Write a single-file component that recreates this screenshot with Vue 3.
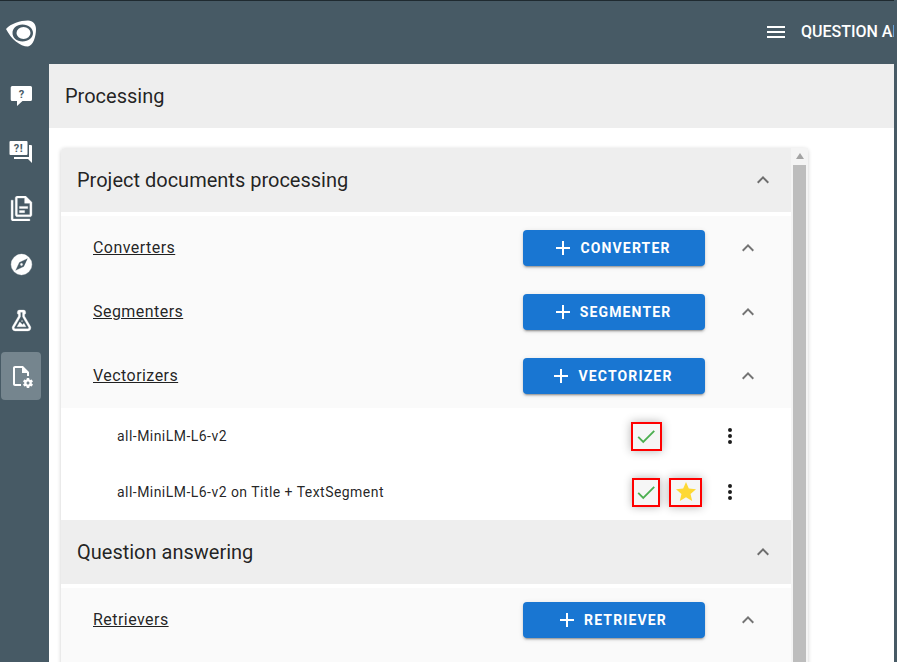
<script setup>
const sideIcons = [
  { id: 'doc', size: 25, d: 'M16 0H8C6.9 0 6 .9 6 2V18C6 19.1 6.9 20 8 20H20C21.1 20 22 19.1 22 18V6L16 0M20 18H8V2H15V7H20V18M4 4V22H20V24H4C2.9 24 2 23.1 2 22V4H4M10 10V12H18V10H10M10 14V16H15V14H10Z' },
  { id: 'compass', size: 25, d: 'M14.19,14.19L6,18L9.81,9.81L18,6M12,2A10,10 0 0,0 2,12A10,10 0 0,0 12,22A10,10 0 0,0 22,12A10,10 0 0,0 12,2M12,10.9A1.1,1.1 0 0,0 10.9,12A1.1,1.1 0 0,0 12,13.1A1.1,1.1 0 0,0 13.1,12A1.1,1.1 0 0,0 12,10.9Z' },
  { id: 'flask', size: 25, d: 'M5,19A1,1 0 0,0 6,20H18A1,1 0 0,0 19,19C19,18.79 18.93,18.59 18.82,18.43L13,8.35V4H11V8.35L5.18,18.43C5.07,18.59 5,18.79 5,19M6,22A3,3 0 0,1 3,19C3,18.4 3.18,17.84 3.5,17.37L9,7.81V6A1,1 0 0,1 8,5V4A2,2 0 0,1 10,2H14A2,2 0 0,1 16,4V5A1,1 0 0,1 15,6V7.81L20.5,17.37C20.82,17.84 21,18.4 21,19A3,3 0 0,1 18,22H6M13,16L14.34,14.66L16.27,18H7.73L10.39,13.39L13,16M12.5,12A0.5,0.5 0 0,1 13,12.5A0.5,0.5 0 0,1 12.5,13A0.5,0.5 0 0,1 12,12.5A0.5,0.5 0 0,1 12.5,12Z' }
]
const fileCog = 'M6 2C4.89 2 4 2.89 4 4V20C4 21.11 4.89 22 6 22H12V20H6V4H13V9H18V12H20V8L14 2M18 14C17.87 14 17.76 14.09 17.74 14.21L17.55 15.53C17.25 15.66 16.96 15.82 16.7 16L15.46 15.5C15.35 15.5 15.22 15.5 15.15 15.63L14.15 17.36C14.09 17.47 14.11 17.6 14.21 17.68L15.27 18.5C15.25 18.67 15.24 18.83 15.24 19C15.24 19.17 15.25 19.33 15.27 19.5L14.21 20.32C14.12 20.4 14.09 20.53 14.15 20.64L15.15 22.37C15.21 22.5 15.34 22.5 15.46 22.5L16.7 22C16.96 22.18 17.24 22.35 17.55 22.47L17.74 23.79C17.76 23.91 17.86 24 18 24H20C20.11 24 20.22 23.91 20.24 23.79L20.43 22.47C20.73 22.34 21 22.18 21.27 22L22.5 22.5C22.63 22.5 22.76 22.5 22.83 22.37L23.83 20.64C23.89 20.53 23.86 20.4 23.77 20.32L22.7 19.5C22.72 19.33 22.74 19.17 22.74 19C22.74 18.83 22.73 18.67 22.7 18.5L23.76 17.68C23.85 17.6 23.88 17.47 23.82 17.36L22.82 15.63C22.76 15.5 22.63 15.5 22.5 15.5L21.27 16C21 15.82 20.73 15.65 20.42 15.53L20.23 14.21C20.22 14.09 20.11 14 20 14M19 17.5C19.83 17.5 20.5 18.17 20.5 19C20.5 19.83 19.83 20.5 19 20.5C18.16 20.5 17.5 19.83 17.5 19C17.5 18.17 18.17 17.5 19 17.5Z'
const chevron = 'M7.41,15.41L12,10.83L16.59,15.41L18,14L12,8L6,14L7.41,15.41Z'
const plus = 'M19,13H13V19H11V13H5V11H11V5H13V11H19V13Z'
const dots = 'M12,16A2,2 0 0,1 14,18A2,2 0 0,1 12,20A2,2 0 0,1 10,18A2,2 0 0,1 12,16M12,10A2,2 0 0,1 14,12A2,2 0 0,1 12,14A2,2 0 0,1 10,12A2,2 0 0,1 12,10M12,4A2,2 0 0,1 14,6A2,2 0 0,1 12,8A2,2 0 0,1 10,6A2,2 0 0,1 12,4Z'
const star = 'M12,17.27L18.18,21L16.54,13.97L22,9.24L14.81,8.62L12,2L9.19,8.62L2,9.24L7.45,13.97L5.82,21L12,17.27Z'

const sections = [
  {
    title: 'Project documents processing',
    rows: [
      { name: 'Converters', action: 'CONVERTER' },
      { name: 'Segmenters', action: 'SEGMENTER' },
      { name: 'Vectorizers', action: 'VECTORIZER' }
    ],
    items: [
      { name: 'all-MiniLM-L6-v2', wide: true, starred: false },
      { name: 'all-MiniLM-L6-v2 on Title + TextSegment', wide: false, starred: true }
    ]
  },
  {
    title: 'Question answering',
    rows: [{ name: 'Retrievers', action: 'RETRIEVER' }],
    items: []
  }
]
</script>

<template>
  <div class="shell">
    <header class="topbar">
      <div class="logo">
        <svg width="32" height="30" viewBox="0 0 32 30">
          <path class="logo-outer" fill-rule="evenodd" d="M1 11C6 5.500 15 2.500 23 2.500C28 3 31 6 31 11C31 19 28 27.500 23 28.500C15 28.500 6 21 1 11ZM17.500 6.500C11.500 6.500 7.500 10.500 7.500 15C7.500 19.500 11.500 23.500 17.500 23.500C23.500 23.500 28 19.500 28 15C28 10.500 23.500 6.500 17.500 6.500Z"/>
          <ellipse class="logo-outer" cx="18.500" cy="15" rx="7" ry="6"/>
        </svg>
      </div>
      <div class="menu">
        <svg width="24" height="24" viewBox="0 0 24 24"><path fill="#fff" d="M3,6H21V8H3V6M3,11H21V13H3V11M3,16H21V18H3V16Z"/></svg>
      </div>
      <div class="app-title">QUESTION ANSWERING</div>
    </header>

    <div class="body">
      <nav class="sidebar">
        <div class="nav-item">
          <svg width="24" height="24" viewBox="0 0 24 24">
            <path fill="#fff" d="M3.200 2H21.500A1.500 1.500 0 0 1 23 3.500V15.500A1.500 1.500 0 0 1 21.500 17H13.500L8 22V17H3.200A1.500 1.500 0 0 1 1.700 15.500V3.500A1.500 1.500 0 0 1 3.200 2Z"/>
            <text x="12.400" y="13.500" class="glyph" text-anchor="middle">?</text>
          </svg>
        </div>
        <div class="nav-item">
          <svg width="24" height="24" viewBox="0 0 24 24">
            <path fill="#fff" d="M1.500 1H17.500A1 1 0 0 1 18.500 2V14A1 1 0 0 1 17.500 15H1.500A1 1 0 0 1 .5 14V2A1 1 0 0 1 1.500 1Z"/>
            <path fill="#fff" d="M20 5H22A1 1 0 0 1 23 6V23L19 19H5V17H20Z"/>
            <text x="9.500" y="12" class="glyph glyph-wide" text-anchor="middle">?!</text>
          </svg>
        </div>
        <div v-for="icon in sideIcons" :key="icon.id" class="nav-item">
          <svg :width="icon.size" :height="icon.size" viewBox="0 0 24 24"><path fill="#fff" stroke="#fff" stroke-width="0.300" :d="icon.d"/></svg>
        </div>
        <div class="nav-item active">
          <svg width="24" height="24" viewBox="0 0 24 24"><path fill="#fff" :d="fileCog"/></svg>
        </div>
      </nav>

      <main class="main">
        <div class="page-head">Processing</div>
        <div class="page-content">
          <div class="card">
            <div class="list">
              <section v-for="section in sections" :key="section.title">
                <div class="section-head">
                  <span class="section-title">{{ section.title }}</span>
                  <svg class="chev" width="24" height="24" viewBox="0 0 24 24"><path :d="chevron"/></svg>
                </div>
                <div class="rows">
                  <div v-for="row in section.rows" :key="row.name" class="row">
                    <span class="row-name">{{ row.name }}</span>
                    <button class="add-btn" type="button">
                      <svg width="24" height="24" viewBox="0 0 24 24"><path fill="#fff" :d="plus"/></svg>
                      <span>{{ row.action }}</span>
                    </button>
                    <svg class="chev" width="24" height="24" viewBox="0 0 24 24"><path :d="chevron"/></svg>
                  </div>
                </div>
                <div v-if="section.items.length" class="items">
                  <div v-for="item in section.items" :key="item.name" class="item">
                    <span class="item-name">{{ item.name }}</span>
                    <div class="marks">
                      <div class="mark-cell">
                        <div class="mark" :class="item.wide ? 'mark-wide' : 'mark-narrow'">
                          <svg width="22" height="22" viewBox="0 0 24 24"><path class="check" d="M3.500 13L9 18.500L21 6.500"/></svg>
                        </div>
                      </div>
                      <div v-if="item.starred" class="mark mark-star">
                        <svg width="24" height="24" viewBox="0 0 24 24"><path fill="#fdd835" :d="star"/></svg>
                      </div>
                    </div>
                    <svg width="24" height="24" viewBox="0 0 24 24"><path fill="#1c1c1c" :d="dots"/></svg>
                  </div>
                </div>
              </section>
            </div>
            <div class="scrollbar">
              <div class="scroll-arrow"></div>
              <div class="scroll-thumb"></div>
            </div>
          </div>
        </div>
      </main>
    </div>
  </div>
</template>

<style>
html, body { margin: 0; overflow: hidden; }
</style>

<style scoped>
.shell {
  width: 897px;
  height: 662px;
  overflow: hidden;
  display: flex;
  flex-direction: column;
  background: #475a65;
  font-family: Roboto, "Liberation Sans", sans-serif;
  color: rgba(0, 0, 0, 0.87);
}
.topbar {
  height: 63px;
  flex: none;
  display: flex;
  align-items: center;
  border-top: 1px solid #1f2a30;
  margin-right: 3px;
  overflow: hidden;
  color: #fff;
}
.logo {
  width: 42px;
  flex: none;
  display: flex;
  justify-content: center;
}
.logo-outer { fill: #fff; }
.menu {
  flex: none;
  margin-left: 722px;
  margin-top: -2px;
  height: 24px;
}
.app-title {
  flex: none;
  margin-left: 13px;
  margin-top: -2px;
  font-size: 16px;
  font-weight: 500;
  white-space: nowrap;
}
.body {
  flex: 1;
  min-height: 0;
  display: flex;
}
.sidebar {
  width: 48px;
  flex: none;
  padding: 8px 0 0 1px;
  display: flex;
  flex-direction: column;
  gap: 8px;
}
.nav-item {
  width: 40px;
  height: 48px;
  border-radius: 4px;
  display: flex;
  align-items: center;
  justify-content: center;
}
.nav-item.active { background: #75858e; }
.glyph {
  font-family: Roboto, sans-serif;
  font-size: 11px;
  font-weight: 700;
  fill: #475a65;
}
.glyph-wide { letter-spacing: 0.5px; }
.main {
  flex: 1;
  min-width: 0;
  margin-right: 3px;
  background: #fff;
  display: flex;
  flex-direction: column;
}
.page-head {
  height: 64px;
  flex: none;
  display: flex;
  align-items: center;
  padding-left: 16px;
  background: #eeeeee;
  font-size: 20px;
}
.page-content {
  flex: 1;
  min-height: 0;
  padding: 20px 0 0 12px;
}
.card {
  width: 747px;
  height: 600px;
  display: flex;
  border-radius: 4px;
  background: #fff;
  box-shadow: 0 1px 4px rgba(0, 0, 0, 0.2);
}
.list {
  width: 730px;
  flex: none;
}
.section-head {
  height: 64px;
  display: flex;
  align-items: center;
  justify-content: space-between;
  padding: 0 16px;
  background: #eeeeee;
}
section:first-child .section-head { border-top-left-radius: 4px; }
.section-title {
  font-size: 20px;
}
.chev { flex: none; fill: rgba(0, 0, 0, 0.54); }
.rows {
  margin-top: 4px;
  background: #fafafa;
}
section:last-child .rows { padding-bottom: 40px; }
.row {
  height: 64px;
  display: flex;
  align-items: center;
  padding: 0 31px 0 32px;
}
.row-name {
  flex: 1;
  font-size: 16px;
  letter-spacing: 0.45px;
  text-decoration: underline;
  padding-bottom: 2px;
}
.add-btn {
  width: 182px;
  height: 36px;
  margin-right: 31px;
  padding: 0 6px 0 0;
  border: 0;
  border-radius: 4px;
  background: #1976d2;
  color: #fff;
  display: flex;
  align-items: center;
  justify-content: center;
  gap: 5px;
  font-family: inherit;
  font-size: 14px;
  font-weight: 700;
  letter-spacing: 1.15px;
  box-shadow: 0 3px 1px -2px rgba(0, 0, 0, 0.2), 0 2px 2px 0 rgba(0, 0, 0, 0.14), 0 1px 5px 0 rgba(0, 0, 0, 0.12);
}
.items { background: #fff; }
.item {
  height: 56px;
  display: flex;
  align-items: center;
  padding: 0 49px 0 56px;
}
.item-name {
  flex: 1;
  font-size: 14px;
  letter-spacing: 0.46px;
}
.marks {
  width: 88px;
  flex: none;
  display: flex;
  align-items: center;
}
.mark-cell {
  width: 32px;
  display: flex;
  justify-content: center;
}
.mark {
  box-sizing: border-box;
  height: 29px;
  border: 2px solid #f00;
  background: #f6f6f6;
  display: flex;
  align-items: center;
  justify-content: center;
  box-shadow: 0 0 9px rgba(0, 0, 0, 0.3);
}
.mark-wide { width: 31px; }
.mark-narrow { width: 28px; }
.mark-star { width: 33px; margin-left: 7px; }
.check {
  fill: none;
  stroke: #4caf50;
  stroke-width: 2;
}
.scrollbar {
  flex: 1;
  padding: 0 2px;
  background: #f4f4f4;
}
.scroll-arrow {
  width: 0;
  height: 0;
  margin: 5px auto 6px;
  border-left: 4px solid transparent;
  border-right: 4px solid transparent;
  border-bottom: 6px solid #a3a3a3;
}
.scroll-thumb {
  height: 560px;
  background: #bdbdbd;
}
</style>
